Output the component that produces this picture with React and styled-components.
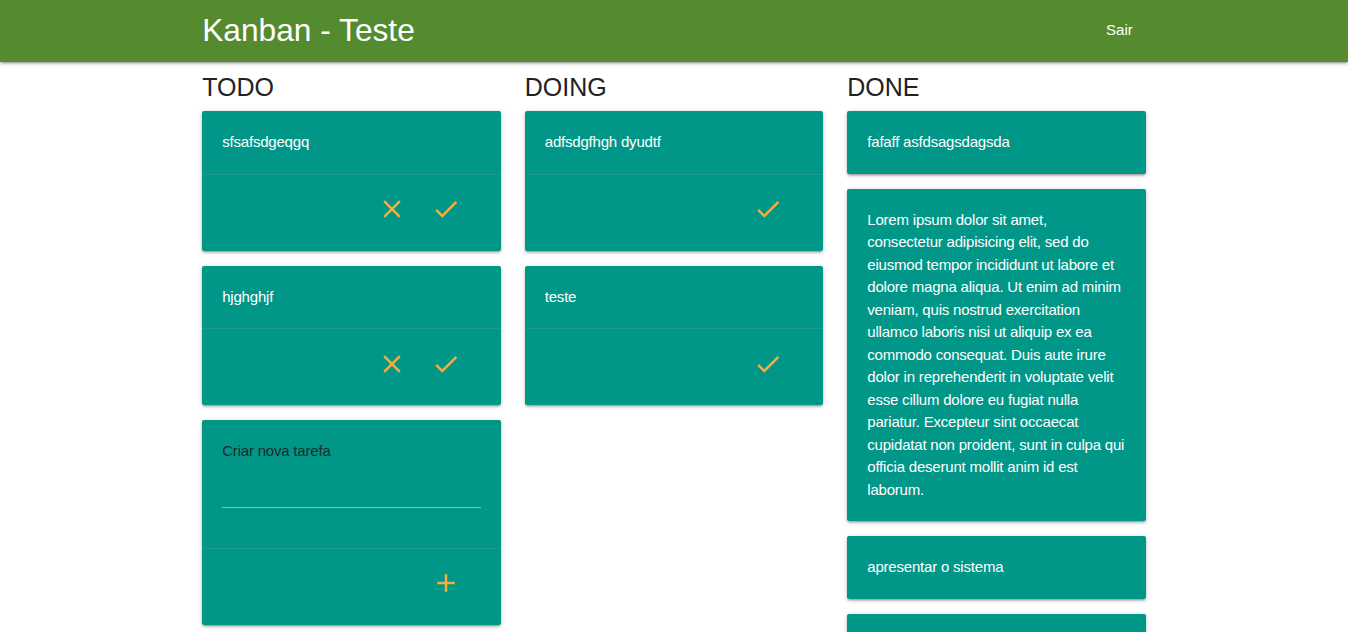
import React from "react";
import styled, { createGlobalStyle } from "styled-components";

const GlobalStyle = createGlobalStyle`
  html, body {
    margin: 0;
    padding: 0;
    background: #fff;
    font-family: "Liberation Sans", Arial, sans-serif;
    color: rgba(0, 0, 0, 0.87);
  }
  * {
    box-sizing: border-box;
  }
`;

const shadow =
  "0 2px 2px 0 rgba(0,0,0,0.14), 0 3px 1px -2px rgba(0,0,0,0.12), 0 1px 5px 0 rgba(0,0,0,0.2)";

const columns = [
  {
    title: "TODO",
    cards: [
      { text: "sfsafsdgeqgq", actions: ["close", "check"] },
      { text: "hjghghjf", actions: ["close", "check"] },
    ],
    creator: true,
  },
  {
    title: "DOING",
    cards: [
      { text: "adfsdgfhgh dyudtf", actions: ["check"] },
      { text: "teste", actions: ["check"] },
    ],
  },
  {
    title: "DONE",
    cards: [
      { text: "fafaff asfdsagsdagsda" },
      {
        text:
          "Lorem ipsum dolor sit amet, consectetur adipisicing elit, sed do eiusmod tempor incididunt ut labore et dolore magna aliqua. Ut enim ad minim veniam, quis nostrud exercitation ullamco laboris nisi ut aliquip ex ea commodo consequat. Duis aute irure dolor in reprehenderit in voluptate velit esse cillum dolore eu fugiat nulla pariatur. Excepteur sint occaecat cupidatat non proident, sunt in culpa qui officia deserunt mollit anim id est laborum.",
      },
      { text: "apresentar o sistema" },
      { text: "" },
    ],
  },
];

const paths = {
  close:
    "M19 6.41L17.59 5 12 10.59 6.41 5 5 6.41 10.59 12 5 17.59 6.41 19 12 13.41 17.59 19 19 17.59 13.41 12z",
  check: "M9 16.17L4.83 12l-1.42 1.41L9 19 21 7l-1.41-1.41z",
  add: "M19 13h-6v6h-2v-6H5v-2h6V5h2v6h6v2z",
};

const Icon = ({ name }) => (
  <svg width="30" height="30" viewBox="0 0 24 24" fill="currentColor">
    <path d={paths[name]} />
  </svg>
);

const App = () => {
  return (
    <>
      <GlobalStyle />
      <Nav>
        <NavWrap>
          <Brand>Kanban - Teste</Brand>
          <NavLink href="#">Sair</NavLink>
        </NavWrap>
      </Nav>
      <Container>
        <Row>
          {columns.map((col) => (
            <Col key={col.title}>
              <Heading>{col.title}</Heading>
              {col.cards.map((card, i) => (
                <Card key={i}>
                  <CardContent>{card.text}</CardContent>
                  {card.actions && (
                    <CardAction>
                      {card.actions.map((a) => (
                        <IconButton key={a}>
                          <Icon name={a} />
                        </IconButton>
                      ))}
                    </CardAction>
                  )}
                </Card>
              ))}
              {col.creator && (
                <Card>
                  <CardContent>
                    <Label>Criar nova tarefa</Label>
                    <Input />
                  </CardContent>
                  <CardAction>
                    <IconButton>
                      <Icon name="add" />
                    </IconButton>
                  </CardAction>
                </Card>
              )}
            </Col>
          ))}
        </Row>
      </Container>
    </>
  );
};

const Nav = styled.nav`
  background: #558b2f;
  height: 62px;
  box-shadow: ${shadow};
  color: #fff;
  position: relative;
  z-index: 2;
`;

const NavWrap = styled.div`
  width: 70%;
  margin: 0 auto;
  height: 100%;
  display: flex;
  justify-content: space-between;
  align-items: flex-start;
`;

const Brand = styled.a`
  font-size: 31.7px;
  line-height: 60px;
  color: #fff;
  text-decoration: none;
`;

const NavLink = styled.a`
  font-size: 15px;
  line-height: 60px;
  padding: 0 13px;
  color: #fff;
  text-decoration: none;
`;

const Container = styled.div`
  width: 70%;
  margin: 0 auto;
`;

const Row = styled.div`
  display: grid;
  grid-template-columns: repeat(3, 1fr);
  margin: 0 -12px;
`;

const Col = styled.div`
  padding: 0 12px;
  display: flex;
  flex-direction: column;
  gap: 15px;
`;

const Heading = styled.h5`
  font-size: 25px;
  font-weight: 400;
  line-height: 27px;
  margin: 12px 0 -5px;
  color: #222;
`;

const Card = styled.div`
  background: #009688;
  border-radius: 2px;
  box-shadow: ${shadow};
  color: #fff;
`;

const CardContent = styled.div`
  padding: 20px;
  font-size: 15px;
  line-height: 22.5px;
  letter-spacing: -0.2px;
  min-height: 62.5px;
`;

const CardAction = styled.div`
  border-top: 1px solid rgba(160, 160, 160, 0.2);
  height: 77px;
  padding: 0 40px 7px 20px;
  display: flex;
  justify-content: flex-end;
  align-items: center;
  gap: 24px;
`;

const IconButton = styled.button`
  background: none;
  border: none;
  padding: 0;
  width: 30px;
  height: 30px;
  color: #f5ad3b;
  cursor: pointer;
  display: flex;
  svg {
    display: block;
  }
`;

const Label = styled.label`
  display: block;
  color: #1e2b2a;
  font-size: 15px;
  line-height: 22.5px;
`;

const Input = styled.input`
  display: block;
  width: 100%;
  height: 45px;
  background: transparent;
  border: none;
  border-bottom: 1px solid #a9b0ae;
  outline: none;
  margin-bottom: 20px;
  color: #fff;
  font-size: 15px;
`;

export default App;
